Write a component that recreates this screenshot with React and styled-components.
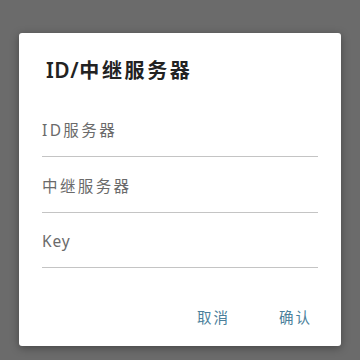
import React from "react";
import styled, { createGlobalStyle } from "styled-components";

const GlobalStyle = createGlobalStyle`
  html, body {
    margin: 0;
    padding: 0;
    background: #6b6b6b;
  }
  body {
    font-family: "Noto Sans", "Noto Sans CJK SC", sans-serif;
  }
`;

const Screen = styled.div`
  width: 360px;
  height: 360px;
  box-sizing: border-box;
  padding: 33px 19px 0 19px;
  background: #6b6b6b;
`;

const Dialog = styled.div`
  box-sizing: border-box;
  width: 322px;
  height: 313px;
  background: #ffffff;
  border-radius: 3px;
  box-shadow: 0 2px 8px rgba(0, 0, 0, 0.35);
  padding: 26px 23px 0 23px;
  display: flex;
  flex-direction: column;
`;

const Title = styled.h2`
  margin: 0 0 18px 4px;
  height: 24px;
  font-size: 20px;
  line-height: 24px;
  font-weight: 600;
  letter-spacing: 2.6px;
  color: #222222;
`;

const Latin = styled.span`
  font-size: 21px;
  line-height: 1;
  letter-spacing: 0.6px;
`;

const Field = styled.div`
  box-sizing: border-box;
  height: ${(p) => p.h || 56}px;
  display: flex;
  align-items: flex-end;
  border-bottom: 1px solid #c4c4c4;
  padding-bottom: 16px;
`;

const Input = styled.input`
  width: 100%;
  border: none;
  outline: none;
  padding: 0;
  background: transparent;
  font-family: "Noto Sans", "Noto Sans CJK SC", sans-serif;
  font-size: 15.5px;
  line-height: 20px;
  letter-spacing: ${(p) => p.spacing || 2.4}px;
  color: #444;

  &::placeholder {
    color: #6a6a6a;
  }
`;

const Actions = styled.div`
  display: flex;
  justify-content: flex-end;
  gap: 49px;
  margin-top: 39px;
  padding-right: 6px;
`;

const ActionButton = styled.button`
  border: none;
  background: none;
  padding: 0;
  cursor: pointer;
  font-family: "Noto Sans", "Noto Sans CJK SC", sans-serif;
  font-size: 14.5px;
  line-height: 20px;
  letter-spacing: 2px;
  color: #4b7f9b;
`;

const App = () => {
  return (
    <>
      <GlobalStyle />
      <Screen>
        <Dialog>
          <Title>
            <Latin>ID/</Latin>中继服务器
          </Title>
          <Field>
            <Input placeholder="ID服务器" />
          </Field>
          <Field>
            <Input placeholder="中继服务器" />
          </Field>
          <Field h={55}>
            <Input placeholder="Key" spacing={0.8} />
          </Field>
          <Actions>
            <ActionButton>取消</ActionButton>
            <ActionButton>确认</ActionButton>
          </Actions>
        </Dialog>
      </Screen>
    </>
  );
};

export default App;
